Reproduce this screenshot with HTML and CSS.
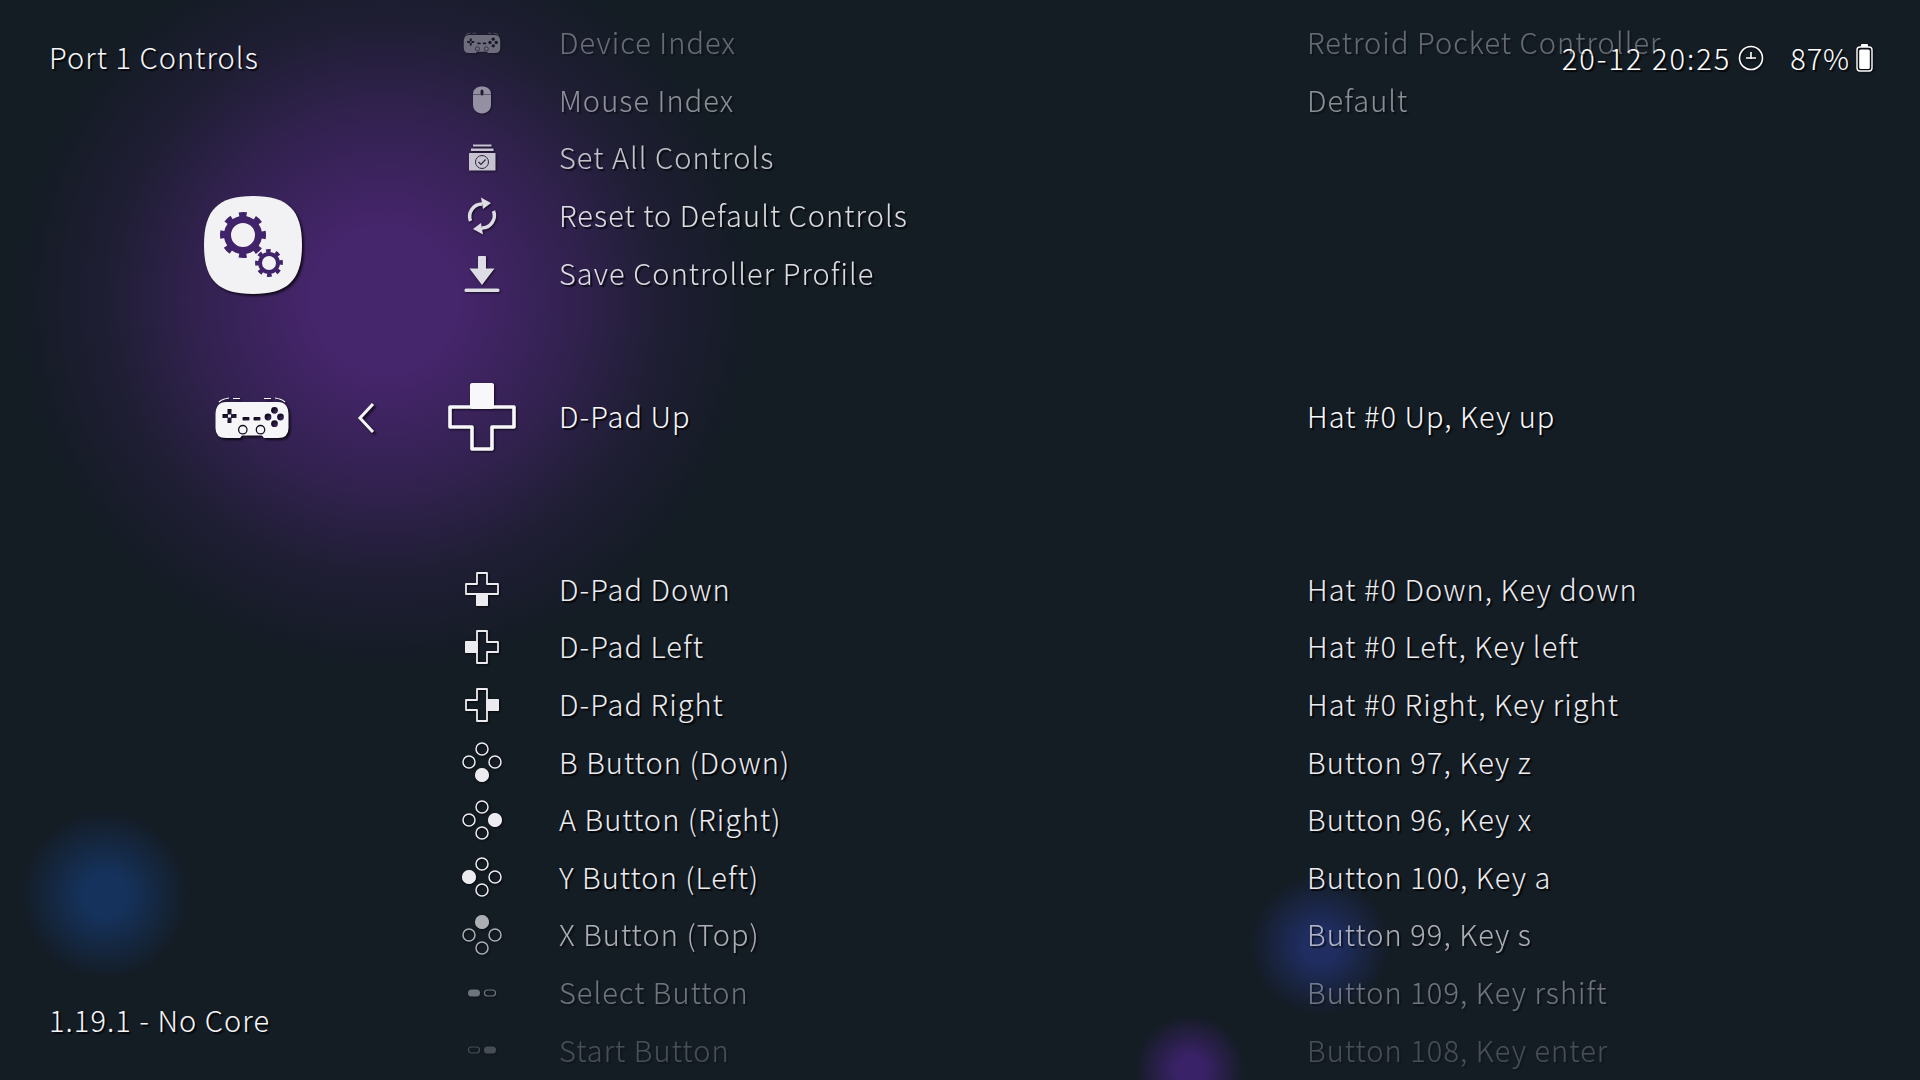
FILE: index.html
```html
<!DOCTYPE html>
<html lang="en">
<head>
  <meta charset="UTF-8">
  <title>Port 1 Controls</title>
  <link rel="stylesheet" href="styles.css">
</head>
<body>
  <svg class="defs" width="0" height="0">
    <defs>
      <mask id="pad-holes" maskUnits="userSpaceOnUse" x="0" y="0" width="80" height="80">
        <rect width="80" height="80" fill="#fff"/>
        <path d="M15.5 31h4v5h5v4h-5v5h-4v-5h-5v-4h5z" fill="#000"/>
        <rect x="16" y="36.5" width="3" height="3" fill="#fff"/>
        <rect x="30.5" y="39" width="7" height="3.4" rx="1" fill="#000"/>
        <rect x="41.5" y="39" width="7" height="3.4" rx="1" fill="#000"/>
        <circle cx="62.5" cy="32.3" r="3.4" fill="#000"/>
        <circle cx="56" cy="39" r="3.4" fill="#000"/>
        <circle cx="68.5" cy="39" r="3.4" fill="#000"/>
        <circle cx="62.5" cy="45.7" r="3.4" fill="#000"/>
        <circle cx="30.8" cy="51.7" r="4.2" fill="none" stroke="#000" stroke-width="1.3"/>
        <circle cx="48.5" cy="51.7" r="4.2" fill="none" stroke="#000" stroke-width="1.3"/>
      </mask>
      <symbol id="i-pad" viewBox="0 0 80 80">
        <path mask="url(#pad-holes)" d="M14 24H66Q76 24 76.5 36V50Q76.5 60 66 60H52L50 57.5H30L28 60H14Q3.5 60 3.5 50V36Q4 24 14 24Z" fill="currentColor"/>
        <path d="M7 24Q10 21 17 20M21 20.5h7M52 20.5h7M63 20Q70 21 73 24" fill="none" stroke="currentColor" stroke-width="1.2"/>
      </symbol>
      <symbol id="i-mouse" viewBox="0 0 80 80">
        <path d="M40 13c10 0 18 5 18 15v21c0 11-8 18-18 18s-18-7-18-18V28c0-10 8-15 18-15z" fill="currentColor"/>
        <rect x="37" y="19" width="6" height="12" rx="3" fill="#181e28"/>
        <path d="M22 29h15M43 29h15" fill="none" stroke="#181e28" stroke-width="1"/>
      </symbol>
      <symbol id="i-setall" viewBox="0 0 80 80">
        <rect x="22" y="13" width="37" height="4" fill="currentColor"/>
        <rect x="18" y="21" width="45" height="5" fill="currentColor"/>
        <rect x="14" y="30" width="53" height="35" rx="1" fill="currentColor"/>
        <circle cx="40" cy="48" r="13" fill="none" stroke="#2d2a3f" stroke-width="2"/>
        <path d="M33 48l5 5 9-10" fill="none" stroke="#2d2a3f" stroke-width="2.4"/>
      </symbol>
      <symbol id="i-reset" viewBox="0 0 80 80">
        <path d="M17 50A25 25 0 0 1 40 16M63 30A25 25 0 0 1 40 64" fill="none" stroke="currentColor" stroke-width="7"/>
        <path d="M38 3L58 14 42 26ZM42 77L22 66 38 54Z" fill="currentColor"/>
      </symbol>
      <symbol id="i-save" viewBox="0 0 80 80">
        <path d="M34 6h12a2 2 0 0 1 2 2v23h17L40 64 15 31h17V8a2 2 0 0 1 2-2z" fill="currentColor"/>
        <rect x="5" y="71" width="70" height="7" rx="3" fill="currentColor"/>
      </symbol>
      <symbol id="i-cross" viewBox="0 0 80 80">
        <path d="M30 8H50V30H72V50H50V72H30V50H8V30H30Z" fill="none" stroke="currentColor" stroke-width="3.6" stroke-linejoin="round"/>
      </symbol>
      <symbol id="i-ring" viewBox="0 0 80 80">
        <circle cx="40" cy="14" r="12" fill="none" stroke="currentColor" stroke-width="3"/>
        <circle cx="14" cy="40" r="12" fill="none" stroke="currentColor" stroke-width="3"/>
        <circle cx="66" cy="40" r="12" fill="none" stroke="currentColor" stroke-width="3"/>
        <circle cx="40" cy="66" r="12" fill="none" stroke="currentColor" stroke-width="3"/>
      </symbol>
    </defs>
  </svg>

  <div class="status">
    <span>20-12 20:25</span>
    <svg class="clock" viewBox="0 0 26 26"><circle cx="13" cy="13" r="11.5" fill="none" stroke="currentColor" stroke-width="1.6"/><path d="M13 7v7M8 13h10" fill="none" stroke="currentColor" stroke-width="1.6"/></svg>
    <span class="percent">87%</span>
    <svg class="battery" viewBox="0 0 17 28"><rect x="5" y="0" width="7" height="3" rx="1" fill="currentColor"/><rect x="1" y="3" width="15" height="24" rx="3" fill="none" stroke="currentColor" stroke-width="1.4"/><rect x="3.2" y="5.5" width="10.6" height="19.5" rx="1.5" fill="currentColor"/></svg>
  </div>

  <div class="app">
    <aside class="side">
      <div class="side-title">Port 1 Controls</div>
      <svg class="logo" viewBox="0 0 98 98">
        <path d="M49 0C84 0 98 14 98 49S84 98 49 98 0 84 0 49 14 0 49 0Z" fill="#f2f2f4"/>
        <circle cx="39" cy="39" r="15.5" fill="none" stroke="#40236a" stroke-width="7"/>
        <circle cx="39" cy="39" r="20.5" fill="none" stroke="#40236a" stroke-width="5" stroke-dasharray="7.5 8.6" transform="rotate(-101 39 39)"/>
        <circle cx="65" cy="67" r="9" fill="none" stroke="#40236a" stroke-width="4"/>
        <circle cx="65" cy="67" r="12.2" fill="none" stroke="#40236a" stroke-width="3.5" stroke-dasharray="4.6 5" transform="rotate(-104 65 67)"/>
      </svg>
      <div class="side-nav">
        <svg class="side-pad"><use href="#i-pad"/></svg>
        <svg class="chevron" viewBox="0 0 18 32"><path d="M16 2L3 16l13 14" fill="none" stroke="currentColor" stroke-width="3"/></svg>
      </div>
      <div class="side-foot">1.19.1 - No Core</div>
    </aside>

    <main class="list">
      <div class="row fade-1">
        <svg class="icon"><use href="#i-pad"/></svg>
        <span class="label">Device Index</span><span class="value">Retroid Pocket Controller</span>
      </div>
      <div class="row fade-2">
        <svg class="icon"><use href="#i-mouse"/></svg>
        <span class="label">Mouse Index</span><span class="value">Default</span>
      </div>
      <div class="row fade-3">
        <svg class="icon"><use href="#i-setall"/></svg>
        <span class="label">Set All Controls</span>
      </div>
      <div class="row fade-4">
        <svg class="icon"><use href="#i-reset"/></svg>
        <span class="label">Reset to Default Controls</span>
      </div>
      <div class="row fade-4">
        <svg class="icon"><use href="#i-save"/></svg>
        <span class="label">Save Controller Profile</span>
      </div>

      <div class="row active">
        <svg class="icon" viewBox="0 0 80 80">
          <use href="#i-cross" width="80" height="80"/>
          <rect x="28" y="6" width="24" height="26" rx="3" fill="currentColor"/>
        </svg>
        <span class="label">D-Pad Up</span><span class="value">Hat #0 Up, Key up</span>
      </div>

      <div class="row">
        <svg class="icon" viewBox="0 0 80 80">
          <use href="#i-cross" width="80" height="80"/>
          <rect x="28" y="48" width="24" height="26" rx="3" fill="currentColor"/>
        </svg>
        <span class="label">D-Pad Down</span><span class="value">Hat #0 Down, Key down</span>
      </div>
      <div class="row">
        <svg class="icon" viewBox="0 0 80 80">
          <use href="#i-cross" width="80" height="80"/>
          <rect x="6" y="28" width="26" height="24" rx="3" fill="currentColor"/>
        </svg>
        <span class="label">D-Pad Left</span><span class="value">Hat #0 Left, Key left</span>
      </div>
      <div class="row">
        <svg class="icon" viewBox="0 0 80 80">
          <use href="#i-cross" width="80" height="80"/>
          <rect x="48" y="28" width="26" height="24" rx="3" fill="currentColor"/>
        </svg>
        <span class="label">D-Pad Right</span><span class="value">Hat #0 Right, Key right</span>
      </div>
      <div class="row">
        <svg class="icon" viewBox="0 0 80 80">
          <use href="#i-ring" width="80" height="80"/>
          <circle cx="40" cy="66" r="14" fill="currentColor"/>
        </svg>
        <span class="label">B Button (Down)</span><span class="value">Button 97, Key z</span>
      </div>
      <div class="row">
        <svg class="icon" viewBox="0 0 80 80">
          <use href="#i-ring" width="80" height="80"/>
          <circle cx="66" cy="40" r="14" fill="currentColor"/>
        </svg>
        <span class="label">A Button (Right)</span><span class="value">Button 96, Key x</span>
      </div>
      <div class="row">
        <svg class="icon" viewBox="0 0 80 80">
          <use href="#i-ring" width="80" height="80"/>
          <circle cx="14" cy="40" r="14" fill="currentColor"/>
        </svg>
        <span class="label">Y Button (Left)</span><span class="value">Button 100, Key a</span>
      </div>
      <div class="row fade-5">
        <svg class="icon" viewBox="0 0 80 80">
          <use href="#i-ring" width="80" height="80"/>
          <circle cx="40" cy="14" r="14" fill="currentColor"/>
        </svg>
        <span class="label">X Button (Top)</span><span class="value">Button 99, Key s</span>
      </div>
      <div class="row fade-6">
        <svg class="icon" viewBox="0 0 80 80">
          <rect x="12" y="33" width="24" height="14" rx="7" fill="currentColor"/>
          <rect x="45" y="34" width="22" height="12" rx="6" fill="none" stroke="currentColor" stroke-width="2.4"/>
        </svg>
        <span class="label">Select Button</span><span class="value">Button 109, Key rshift</span>
      </div>
      <div class="row fade-7">
        <svg class="icon" viewBox="0 0 80 80">
          <rect x="13" y="34" width="22" height="12" rx="6" fill="none" stroke="currentColor" stroke-width="2.4"/>
          <rect x="44" y="33" width="24" height="14" rx="7" fill="currentColor"/>
        </svg>
        <span class="label">Start Button</span><span class="value">Button 108, Key enter</span>
      </div>
    </main>
  </div>
</body>
</html>
```

FILE: styles.css
```css
html, body {
  margin: 0;
  padding: 0;
  height: 100%;
  overflow: hidden;
}

body {
  position: relative;
  color: #e8e8ec;
  font-family: "Noto Sans CJK JP", "Noto Sans", sans-serif;
  font-weight: 300;
  font-size: 29px;
  letter-spacing: 1.05px;
  background-color: #141c24;
  background-image:
    radial-gradient(circle 85px at 105px 895px, #15325c 0%, #15325c 25%, rgba(21, 50, 92, 0) 100%),
    radial-gradient(circle 70px at 1320px 945px, #1f2d60 0%, #1f2d60 25%, rgba(31, 45, 96, 0) 100%),
    radial-gradient(circle 55px at 1190px 1070px, #3a2268 0%, #3a2268 25%, rgba(58, 34, 104, 0) 100%),
    radial-gradient(circle 370px at 385px 300px, #45256b 0%, #45256b 20%, rgba(69, 37, 107, 0.62) 50%, rgba(69, 37, 107, 0.22) 75%, rgba(69, 37, 107, 0) 100%);
}

.defs {
  display: block;
}

.app {
  display: flex;
  height: 1080px;
}

.side {
  width: 440px;
  display: flex;
  flex-direction: column;
  padding-left: 49px;
  box-sizing: border-box;
  color: #f6f6f8;
  text-shadow: 2px 2px 1px rgba(0, 0, 0, 0.75);
}

.side-title {
  margin-top: 36px;
  line-height: 40px;
}

.logo {
  width: 98px;
  height: 98px;
  margin: 120px 0 0 155px;
  filter: drop-shadow(2px 2px 1px rgba(0, 0, 0, 0.7));
}

.side-nav {
  display: flex;
  align-items: center;
  height: 80px;
  margin: 84px 0 0 163px;
}

.side-pad {
  width: 80px;
  height: 80px;
  filter: drop-shadow(2px 2px 1px rgba(0, 0, 0, 0.7));
}

.chevron {
  width: 18px;
  height: 32px;
  margin-left: 65px;
  filter: drop-shadow(2px 2px 1px rgba(0, 0, 0, 0.7));
}

.side-foot {
  margin-top: auto;
  margin-bottom: 41px;
  line-height: 40px;
}

.list {
  flex: 1;
  padding-top: 14px;
}

.row {
  display: grid;
  grid-template-columns: 84px 783px 1fr;
  grid-template-rows: 57.6px;
  align-items: center;
  height: 57.6px;
  white-space: nowrap;
  color: #ececf0;
  text-shadow: 2px 2px 1px rgba(0, 0, 0, 0.75);
}

.row.active {
  margin: 86px 0 115px;
  color: #f8f8fa;
}

.icon {
  width: 40px;
  height: 40px;
  justify-self: center;
  overflow: visible;
  filter: drop-shadow(1px 1px 1px rgba(0, 0, 0, 0.7));
}

.active .icon {
  width: 80px;
  height: 80px;
}

.label {
  padding-left: 35px;
  padding-bottom: 3px;
}

.value {
  padding-bottom: 3px;
}

.fade-1 { opacity: 0.38; }
.fade-2 { opacity: 0.55; }
.fade-3 { opacity: 0.8; }
.fade-4 { opacity: 0.92; }
.fade-5 { opacity: 0.7; }
.fade-6 { opacity: 0.42; }
.fade-7 { opacity: 0.24; }

.status {
  position: absolute;
  top: 37px;
  right: 47px;
  display: flex;
  align-items: center;
  height: 40px;
  letter-spacing: 2px;
  color: #fff;
  text-shadow: 2px 2px 1px rgba(0, 0, 0, 0.75);
}

.clock {
  width: 26px;
  height: 26px;
  margin-left: 7px;
  margin-top: 2px;
  filter: drop-shadow(1px 1px 1px rgba(0, 0, 0, 0.7));
}

.percent {
  margin-left: 26px;
  letter-spacing: 0.9px;
}

.battery {
  width: 17px;
  height: 28px;
  margin-left: 6px;
  margin-top: 2px;
  filter: drop-shadow(1px 1px 1px rgba(0, 0, 0, 0.7));
}
```
